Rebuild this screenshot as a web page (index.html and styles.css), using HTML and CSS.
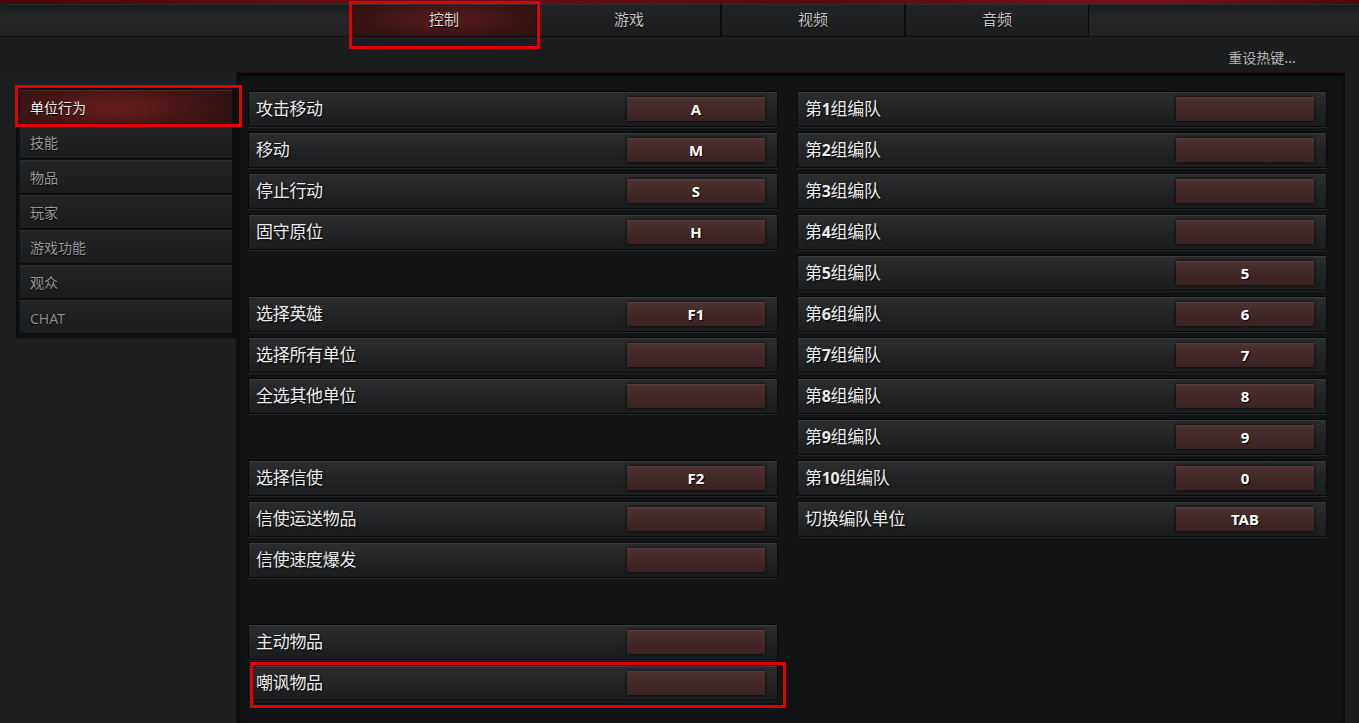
FILE: index.html
```html
<!DOCTYPE html>
<html lang="zh">
<head>
<meta charset="utf-8">
<title>热键设置</title>
<link rel="stylesheet" href="styles.css">
</head>
<body>
<div class="page">
  <div class="topstrip"></div>
  <header class="tabbar">
    <div class="tabs">
      <div class="tab active">控制</div>
      <div class="tab">游戏</div>
      <div class="tab">视频</div>
      <div class="tab">音频</div>
    </div>
  </header>
  <div class="subbar">
    <span class="reset">重设热键...</span>
  </div>
  <main class="main">
    <aside class="side">
      <nav class="sidenav">
        <div class="sideitem active">单位行为</div>
        <div class="sideitem">技能</div>
        <div class="sideitem">物品</div>
        <div class="sideitem">玩家</div>
        <div class="sideitem">游戏功能</div>
        <div class="sideitem">观众</div>
        <div class="sideitem latin">CHAT</div>
      </nav>
    </aside>
    <section class="panel">
      <div class="col">
        <div class="row"><span class="label">攻击移动</span><span class="key">A</span></div>
        <div class="row"><span class="label">移动</span><span class="key">M</span></div>
        <div class="row"><span class="label">停止行动</span><span class="key">S</span></div>
        <div class="row"><span class="label">固守原位</span><span class="key">H</span></div>
        <div class="spacer"></div>
        <div class="row"><span class="label">选择英雄</span><span class="key">F1</span></div>
        <div class="row"><span class="label">选择所有单位</span><span class="key"></span></div>
        <div class="row"><span class="label">全选其他单位</span><span class="key"></span></div>
        <div class="spacer"></div>
        <div class="row"><span class="label">选择信使</span><span class="key">F2</span></div>
        <div class="row"><span class="label">信使运送物品</span><span class="key"></span></div>
        <div class="row"><span class="label">信使速度爆发</span><span class="key"></span></div>
        <div class="spacer"></div>
        <div class="row"><span class="label">主动物品</span><span class="key"></span></div>
        <div class="row"><span class="label">嘲讽物品</span><span class="key"></span></div>
      </div>
      <div class="col">
        <div class="row"><span class="label">第<b>1</b>组编队</span><span class="key"></span></div>
        <div class="row"><span class="label">第<b>2</b>组编队</span><span class="key"></span></div>
        <div class="row"><span class="label">第<b>3</b>组编队</span><span class="key"></span></div>
        <div class="row"><span class="label">第<b>4</b>组编队</span><span class="key"></span></div>
        <div class="row"><span class="label">第<b>5</b>组编队</span><span class="key">5</span></div>
        <div class="row"><span class="label">第<b>6</b>组编队</span><span class="key">6</span></div>
        <div class="row"><span class="label">第<b>7</b>组编队</span><span class="key">7</span></div>
        <div class="row"><span class="label">第<b>8</b>组编队</span><span class="key">8</span></div>
        <div class="row"><span class="label">第<b>9</b>组编队</span><span class="key">9</span></div>
        <div class="row"><span class="label">第<b>10</b>组编队</span><span class="key">0</span></div>
        <div class="row"><span class="label">切换编队单位</span><span class="key">TAB</span></div>
      </div>
    </section>
  </main>
  <div class="mark mark-tab"></div>
  <div class="mark mark-side"></div>
  <div class="mark mark-row"></div>
</div>
</body>
</html>
```

FILE: styles.css
```css
* { box-sizing: border-box; }
html, body { margin: 0; padding: 0; }
body {
  width: 1359px;
  height: 723px;
  overflow: hidden;
  background: #1c1d1e;
  font-family: "Noto Sans CJK SC", "Noto Sans", sans-serif;
  color: #e6e6e6;
}
.page {
  position: relative;
  width: 1359px;
  height: 723px;
  display: flex;
  flex-direction: column;
}
.topstrip {
  height: 4px;
  background: linear-gradient(90deg, #4a070c, #6d0d14 30%, #5a0a10 60%, #7a1018 85%, #4e080d);
}
.tabbar {
  height: 33px;
  background: linear-gradient(#1a1b1c, #262728 40%, #202122);
  border-top: 1px solid #2c2d2e;
  border-top-left-radius: 10px;
  border-bottom: 1px solid #111;
  padding-left: 351px;
  display: flex;
}
.tabs { display: flex; height: 100%; }
.tab {
  width: 184px;
  height: 33px;
  margin-top: -1px;
  background: linear-gradient(#222324, #1b1c1d);
  border: 1px solid #0c0c0d;
  border-top-color: #2e2f30;
  color: #c4c4c4;
  font-size: 15px;
  display: flex;
  justify-content: center;
  padding-top: 3px;
  text-shadow: 0 1px 1px #000;
}
.tab.active {
  width: 186px;
  background: radial-gradient(ellipse 70% 90% at 50% 45%, #5a1c1c, #3a1414 60%, #2a1010);
  color: #d8d8d8;
}
.subbar {
  height: 35px;
  background: linear-gradient(#1d1e1f, #1a1b1c);
  display: flex;
  justify-content: flex-end;
  align-items: center;
  padding-right: 63px;
  padding-top: 4px;
}
.reset {
  font-size: 14px;
  color: #b4b4b4;
}
.main {
  flex: 1;
  display: flex;
}
.side {
  width: 236px;
  background: #1d1e1f;
  padding: 14px 0 0 16px;
}
.sidenav {
  width: 220px;
  height: 253px;
  background: #0f1011;
  border: 1px solid #0a0a0a;
  border-bottom-color: #2a1114;
  padding: 3px 3px 0 3px;
  display: flex;
  flex-direction: column;
  gap: 1px;
}
.sideitem {
  height: 34px;
  background: linear-gradient(#232425, #1b1c1d);
  border-top: 1px solid #2d2e2f;
  border-bottom: 1px solid #0c0c0c;
  color: #9a9a9a;
  font-size: 14px;
  line-height: 32px;
  padding-left: 10px;
  text-shadow: 0 1px 1px #000;
}
.sideitem.latin {
  font-family: "Noto Sans", "Open Sans", sans-serif;
  color: #8e8e8e;
  line-height: 35px;
}
.sideitem.active {
  background: radial-gradient(ellipse 60% 100% at 45% 50%, #6a1f1f, #4a1616 50%, #2e1212);
  border-top-color: #5a2a2a;
  color: #f0f0f0;
}
.panel {
  width: 1109px;
  background: #121314;
  border-top: 1px solid #2a0d10;
  border-left: 2px solid #1a0b0d;
  padding: 18px 0 0 10px;
  display: flex;
  gap: 19px;
  box-shadow: inset 0 2px 4px #000;
}
.col {
  width: 530px;
  display: flex;
  flex-direction: column;
  gap: 5px;
}
.spacer { height: 36px; }
.row {
  height: 36px;
  display: flex;
  align-items: center;
  justify-content: space-between;
  background: linear-gradient(#2c2d2f, #232426 50%, #1b1c1e);
  border: 1px solid #08090a;
  box-shadow: inset 0 1px 0 #3a3b3d, 0 1px 0 #26272a;
  padding: 0 12px 0 7px;
}
.label {
  font-size: 17px;
  color: #ececec;
  text-shadow: 1px 1px 2px #000;
  letter-spacing: -0.3px;
  margin-bottom: 4px;
}
.label b {
  font-family: "Noto Sans", sans-serif;
  font-weight: 700;
  font-size: 16px;
}
.key {
  width: 138px;
  height: 24px;
  background: linear-gradient(#4f3232, #432828 50%, #3b2222);
  box-shadow: 0 0 3px #000, inset 0 1px 0 #5a3a3a;
  color: #ffffff;
  font-family: "Noto Sans", "Liberation Sans", sans-serif;
  font-weight: 700;
  font-size: 15px;
  text-align: center;
  line-height: 24px;
  text-shadow: 1px 1px 1px #000;
}
.mark {
  position: absolute;
  border: 3px solid #e50000;
  pointer-events: none;
}
.mark-tab { left: 349px; top: 1px; width: 191px; height: 48px; }
.mark-side { left: 15px; top: 85px; width: 227px; height: 42px; }
.mark-row { left: 250px; top: 662px; width: 536px; height: 46px; }
```
